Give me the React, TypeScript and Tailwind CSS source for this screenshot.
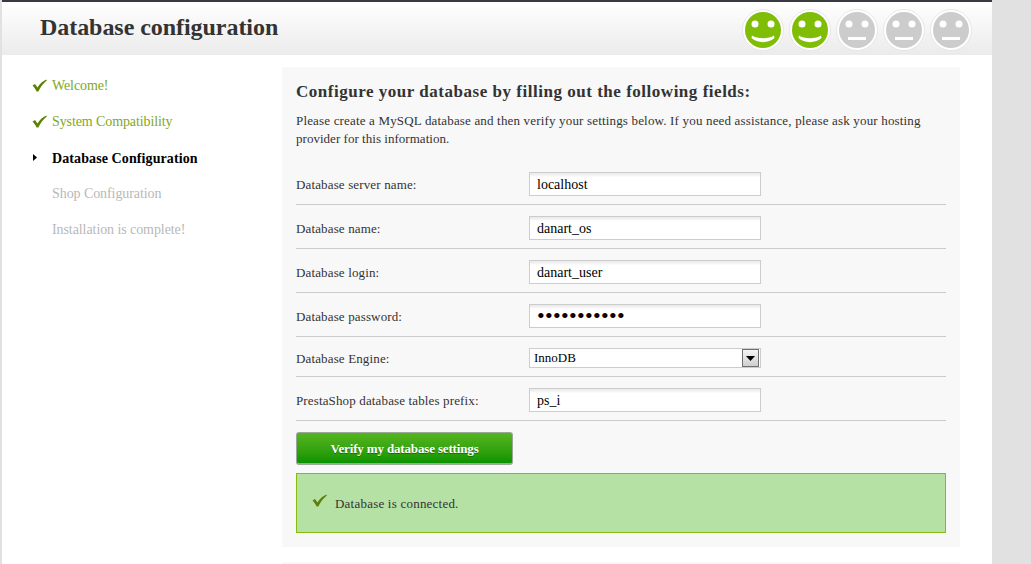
const font = { fontFamily: '"Liberation Serif", serif' }

const steps = [
  { label: 'Welcome!', state: 'done' },
  { label: 'System Compatibility', state: 'done' },
  { label: 'Database Configuration', state: 'current' },
  { label: 'Shop Configuration', state: 'todo' },
  { label: 'Installation is complete!', state: 'todo' },
]

const fields = [
  { label: 'Database server name:', value: 'localhost' },
  { label: 'Database name:', value: 'danart_os' },
  { label: 'Database login:', value: 'danart_user' },
  { label: 'Database password:', value: '•••••••••••', password: true },
]

function Check({ className }: { className: string }) {
  return (
    <svg viewBox="0 0 15 13" className={className}>
      <path d="M0.5 6.5 L3 5 L5.5 8.5 C7.5 5 10.5 2 14.5 0.5 L14.8 1.5 C11.5 4 8.5 8 6.3 12.5 L4.6 12.5 C3.5 10.2 2 8 0.5 6.5 Z" fill="#5f7f06" />
    </svg>
  )
}

function Face({ happy }: { happy: boolean }) {
  return (
    <svg viewBox="0 0 42 42" className="h-[42px] w-[42px]">
      <circle cx="21" cy="21" r="20.5" fill="#ffffff" stroke="#d4d4d4" strokeWidth="0.5" />
      <circle cx="21" cy="21" r="18" fill={happy ? '#7fbd07' : '#cccccc'} />
      <circle cx="13" cy="15" r="3.5" fill="#ffffff" />
      <circle cx="29" cy="15" r="3.5" fill="#ffffff" />
      {happy ? (
        <path d="M10 26.5 C15 30 27 30 32 26.5 L32.5 29 C27 34.5 15 34.5 9.5 29 Z" fill="#ffffff" />
      ) : (
        <rect x="12" y="28" width="18" height="3" fill="#ffffff" />
      )}
    </svg>
  )
}

function TextField({ value, password }: { value: string; password?: boolean }) {
  return (
    <div className="flex h-6 w-[232px] items-center border border-[#cccccc] bg-gradient-to-b from-[#e8e8e8] via-white via-[20%] to-white pl-[7px] text-[14px] tracking-normal text-black">
      <span className={password ? 'text-[22px] leading-none tracking-[0.3px]' : ''} style={font}>{value}</span>
    </div>
  )
}

export default function App() {
  return (
    <div className="flex h-[564px] w-[1031px] overflow-hidden bg-[#e0e1e0] text-[13px] text-[#333333]" style={font}>
      <div className="ml-[2px] flex h-full w-[990px] flex-col bg-white">
        <header className="flex h-[55px] shrink-0 items-center justify-between border-t-2 border-[#383a42] bg-gradient-to-b from-white to-[#ebebeb] pr-[20px] pl-[38px]">
          <h1 className="mb-[4px] text-[24px] font-bold tracking-[-0.05px] text-[#333333]">Database configuration</h1>
          <div className="mt-[2px] flex gap-[5px]">
            <Face happy />
            <Face happy />
            <Face happy={false} />
            <Face happy={false} />
            <Face happy={false} />
          </div>
        </header>

        <div className="flex flex-1 pt-3">
          <aside className="w-[280px] shrink-0 pl-[30px] text-[14px]">
            <ul className="flex flex-col">
              {steps.map((s) => (
                <li key={s.label} className="flex h-[36px] items-center">
                  <span className="flex w-5 shrink-0 items-center">
                    {s.state === 'done' && <Check className="h-[13px] w-[15px]" />}
                    {s.state === 'current' && (
                      <svg viewBox="0 0 4 7" className="mt-[1px] ml-[1px] h-[7px] w-1">
                        <path d="M0 0 L4 3.5 L0 7 Z" fill="#000000" />
                      </svg>
                    )}
                  </span>
                  <span
                    className={
                      s.state === 'done'
                        ? 'tracking-[-0.1px] text-[#7fa81e]'
                        : s.state === 'current'
                          ? 'pt-[2px] font-bold tracking-[0.1px] text-black'
                          : 'tracking-[-0.08px] text-[#b8b8b8]'
                    }
                  >
                    {s.label}
                  </span>
                </li>
              ))}
            </ul>
          </aside>

          <div className="flex w-[678px] flex-col">
            <main className="h-[480px] shrink-0 bg-[#f8f8f8] px-[14px] pt-[14px]">
              <h2 className="text-[17px] leading-[22px] font-bold tracking-[0.52px] text-[#333333]">
                Configure your database by filling out the following fields:
              </h2>
              <p className="mt-[9px] leading-[18px]">
                <span className="block tracking-[0.17px] whitespace-nowrap">
                  Please create a MySQL database and then verify your settings below. If you need assistance, please ask your hosting
                </span>
                <span className="block tracking-[0.03px]">provider for this information.</span>
              </p>

              <div className="mt-[13px] w-[650px] tracking-[0.14px]">
                {fields.map((f) => (
                  <div key={f.label} className="flex h-[44px] items-end border-b border-[#cccccc] pb-[8px]">
                    <label className="mb-[2px] w-[233px] shrink-0">{f.label}</label>
                    <TextField value={f.value} password={f.password} />
                  </div>
                ))}
                <div className="flex h-[40px] items-end border-b border-[#cccccc] pb-[8px]">
                  <label className="w-[233px] shrink-0">Database Engine:</label>
                  <div className="flex h-[20px] w-[232px] items-center justify-between border border-[#cccccc] bg-white pr-px pl-[4px] tracking-normal text-black">
                    <span>InnoDB</span>
                    <span className="flex h-[18px] w-[17px] items-center justify-center border border-[#707070] bg-gradient-to-b from-[#f5f5f5] to-[#cfcfcf]">
                      <svg viewBox="0 0 9 5" className="h-[5px] w-[9px]">
                        <path d="M0 0 H9 L4.5 5 Z" fill="#000000" />
                      </svg>
                    </span>
                  </div>
                </div>
                <div className="flex h-[44px] items-end border-b border-[#cccccc] pb-[8px]">
                  <label className="mb-[2px] w-[233px] shrink-0">PrestaShop database tables prefix:</label>
                  <TextField value="ps_i" />
                </div>
              </div>

              <button className="mt-[11px] block h-[33px] w-[217px] rounded-[3px] border border-b-2 border-[#9aa89a] bg-gradient-to-b from-[#55b61f] to-[#059300] pt-[2px] text-center text-[13px] font-bold tracking-[-0.15px] text-white [text-shadow:0_1px_0_rgba(0,60,0,0.5)]">
                Verify my database settings
              </button>

              <div className="mt-[8px] flex h-[60px] w-[650px] items-center border border-[#86bd0e] bg-[#b6e1a4] pl-[15px]">
                <Check className="mb-[5px] h-[13px] w-[15px]" />
                <span className="mt-[2px] ml-[8px] tracking-[0.22px] text-[#333333]">Database is connected.</span>
              </div>
            </main>
            <div className="mt-[15px] flex-1 bg-[#f8f8f8]" />
          </div>
        </div>
      </div>
    </div>
  )
}
